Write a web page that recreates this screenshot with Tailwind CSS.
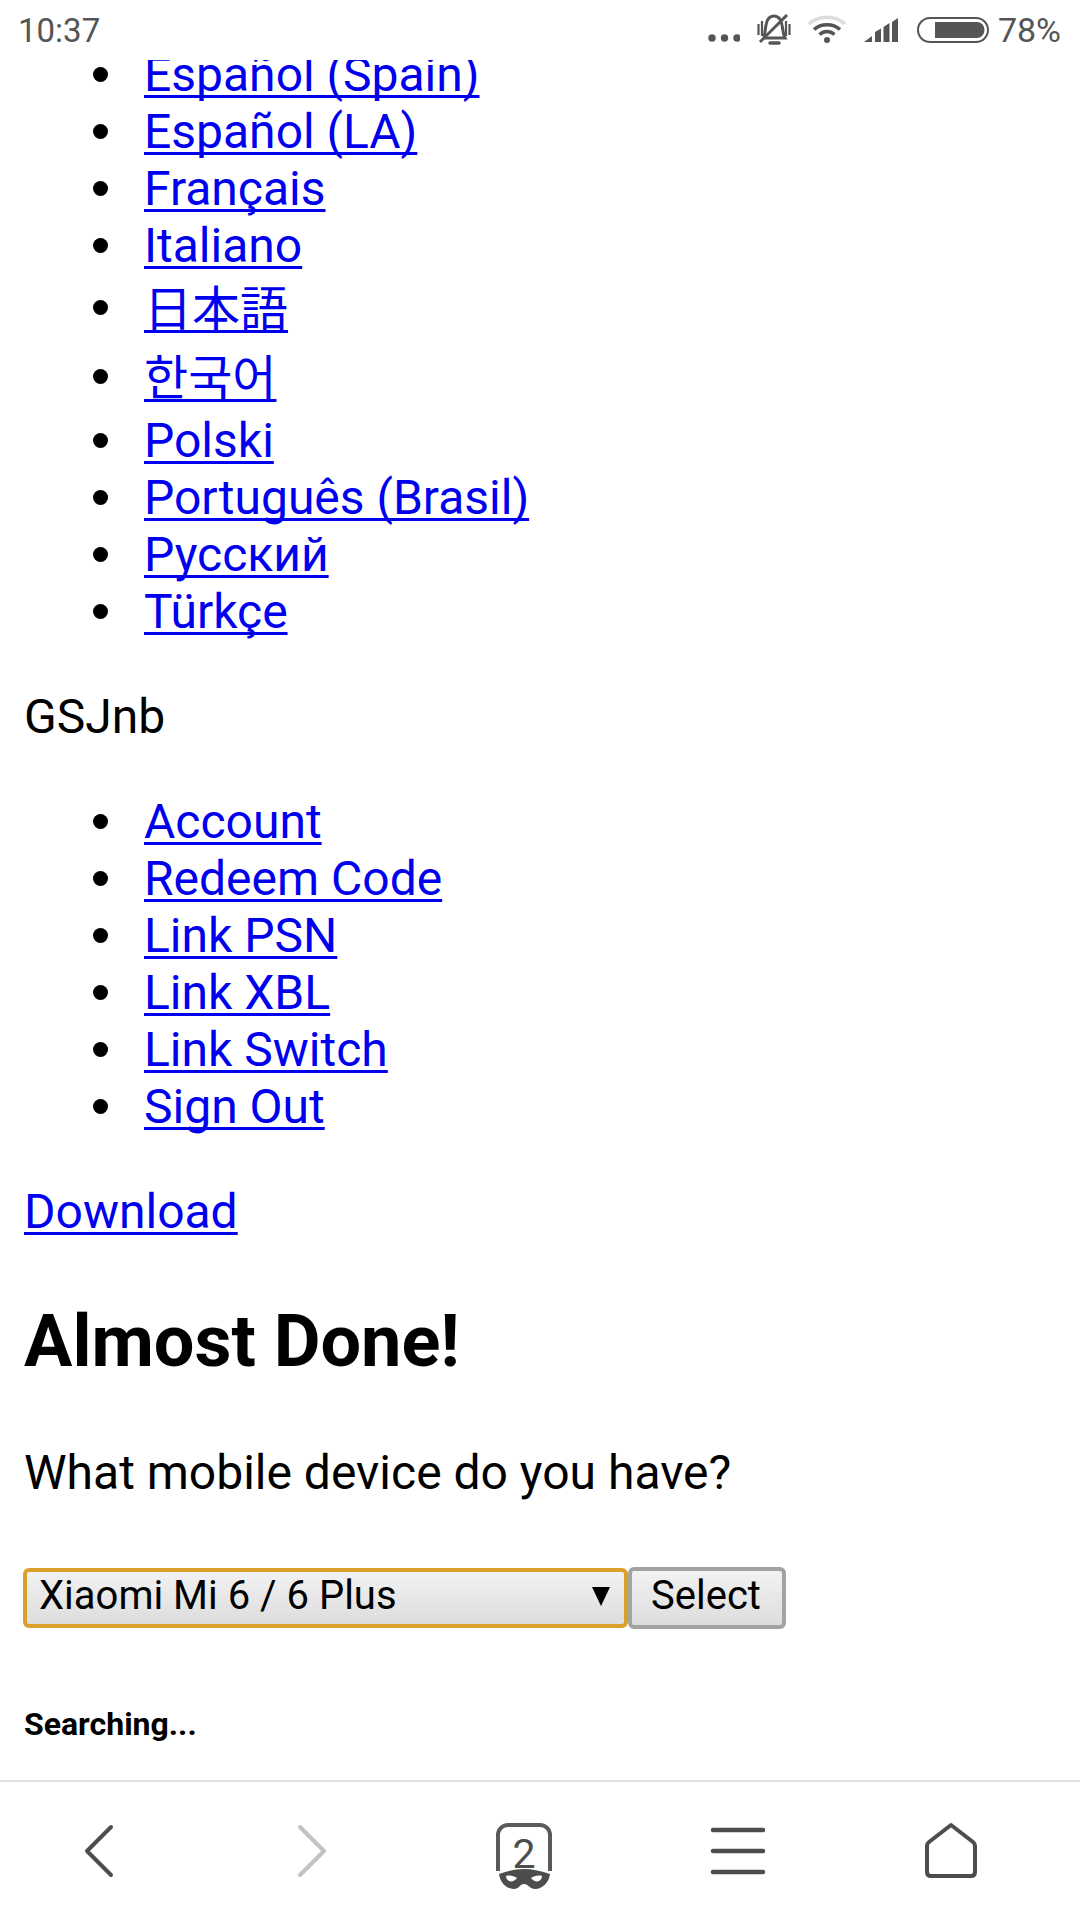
<!DOCTYPE html>
<html lang="en">
<head>
    <meta charset="UTF-8">
    <meta name="viewport" content="width=device-width, initial-scale=1.0">
    <title>Almost Done!</title>
    <script src="https://cdn.jsdelivr.net/npm/@tailwindcss/browser@4"></script>
</head>
<body class="bg-white text-black font-['Roboto',sans-serif]">
<div class="w-[1080px] h-[1920px] flex flex-col overflow-hidden">

    <!-- Status bar -->
    <header class="relative z-10 h-[60px] shrink-0 bg-white flex items-center pl-[18px] pr-[19px] text-[#555555] text-[33px]">
        <span class="mt-[1px]">10:37</span>
        <div class="ml-auto flex items-center">
            <svg width="32" height="8" viewBox="0 0 32 8" class="mt-[16px] text-[#555555]" fill="currentColor"><circle cx="4" cy="4" r="3.7"/><circle cx="16.5" cy="4" r="3.7"/><circle cx="29" cy="4" r="3.7"/></svg>
            <svg width="34" height="31" viewBox="0 0 34 31" class="ml-[17px] mt-[-1px]" fill="none" stroke="#555555" stroke-width="3"><path d="M7 24C8 20 8 16 9 11 10 5 13 2 17 2 21 2 24 5 25 11 26 16 26 20 28 24Z"/><path d="M13 29h9" stroke-width="3.500" stroke-linecap="round"/><path d="M1.500 10v11M5 7v15M29 7v15M32.500 10v11" stroke-width="2.200"/><path d="M3 28 30 1"/></svg>
            <svg width="40" height="28" viewBox="0 0 40 28" class="ml-[16px] mt-[-2px]" fill="none"><path d="M2 9C12 0 28 0 38 9" stroke="#dddddd" stroke-width="3.5"/><path d="M7 14.500C14 8 26 8 33 14.500M12.500 19.500C17 15.500 23 15.500 27.500 19.500" stroke="#555555" stroke-width="3.500"/><circle cx="20" cy="25" r="3" fill="#555555"/></svg>
            <svg width="38" height="26" viewBox="0 0 38 26" class="ml-[17px]" fill="#555555"><path d="M0 25 8 19v6zM11 15l6-3.500V25h-6zM19.500 10l6-4V25h-6zM28 5l3-2 3-2V25h-6z"/></svg>
            <svg width="72" height="26" viewBox="0 0 72 26" class="ml-[15px]" fill="none"><rect x="1" y="1" width="70" height="24" rx="12" stroke="#555555" stroke-width="2"/><path d="M18 5h42a7.500 8 0 0 1 7.500 8 7.500 8 0 0 1-7.500 8H18z" fill="#555555"/></svg>
            <span class="ml-[9px] mt-[1px] text-[34px]">78%</span>
        </div>
    </header>

    <!-- Page content -->
    <main class="flex-1 overflow-hidden text-[48px] leading-[57px]">
        <div class="mt-[-14.5px] pl-[24px]">
            <ul class="pl-[69px] text-[#0000ee] underline decoration-[3px] underline-offset-[4px] [text-decoration-skip-ink:none]">
                <li class="flex items-center gap-[36px] before:content-[''] before:size-[15px] before:rounded-full before:bg-black"><a href="#">Español (Spain)</a></li>
                <li class="flex items-center gap-[36px] before:content-[''] before:size-[15px] before:rounded-full before:bg-black"><a href="#">Español (LA)</a></li>
                <li class="flex items-center gap-[36px] before:content-[''] before:size-[15px] before:rounded-full before:bg-black"><a href="#">Français</a></li>
                <li class="flex items-center gap-[36px] before:content-[''] before:size-[15px] before:rounded-full before:bg-black"><a href="#">Italiano</a></li>
                <li class="h-[67px] flex items-center gap-[36px] before:content-[''] before:size-[15px] before:rounded-full before:bg-black"><a href="#" lang="ja" class="mb-[3px] font-['Noto_Sans_CJK_JP',sans-serif]">日本語</a></li>
                <li class="h-[71px] flex items-center gap-[36px] before:content-[''] before:size-[15px] before:rounded-full before:bg-black"><a href="#" lang="ko" class="mb-[3px] font-['Noto_Sans_CJK_KR',sans-serif]">한국어</a></li>
                <li class="flex items-center gap-[36px] before:content-[''] before:size-[15px] before:rounded-full before:bg-black"><a href="#">Polski</a></li>
                <li class="flex items-center gap-[36px] before:content-[''] before:size-[15px] before:rounded-full before:bg-black"><a href="#">Português (Brasil)</a></li>
                <li class="flex items-center gap-[36px] before:content-[''] before:size-[15px] before:rounded-full before:bg-black"><a href="#">Русский</a></li>
                <li class="flex items-center gap-[36px] before:content-[''] before:size-[15px] before:rounded-full before:bg-black"><a href="#">Türkçe</a></li>
            </ul>
            <p class="mt-[48px]">GSJnb</p>
            <ul class="mt-[48px] pl-[69px] text-[#0000ee] underline decoration-[3px] underline-offset-[4px] [text-decoration-skip-ink:none]">
                <li class="flex items-center gap-[36px] before:content-[''] before:size-[15px] before:rounded-full before:bg-black"><a href="#">Account</a></li>
                <li class="flex items-center gap-[36px] before:content-[''] before:size-[15px] before:rounded-full before:bg-black"><a href="#">Redeem Code</a></li>
                <li class="flex items-center gap-[36px] before:content-[''] before:size-[15px] before:rounded-full before:bg-black"><a href="#">Link PSN</a></li>
                <li class="flex items-center gap-[36px] before:content-[''] before:size-[15px] before:rounded-full before:bg-black"><a href="#">Link XBL</a></li>
                <li class="flex items-center gap-[36px] before:content-[''] before:size-[15px] before:rounded-full before:bg-black"><a href="#">Link Switch</a></li>
                <li class="flex items-center gap-[36px] before:content-[''] before:size-[15px] before:rounded-full before:bg-black"><a href="#">Sign Out</a></li>
            </ul>
            <p class="mt-[48px]"><a href="#" class="text-[#0000ee] underline decoration-[3px] underline-offset-[4px] [text-decoration-skip-ink:none]">Download</a></p>
            <h2 class="mt-[60px] text-[72px] leading-[84px] font-bold">Almost Done!</h2>
            <p class="mt-[60px]">What mobile device do you have?</p>
            <form class="mt-[66px] ml-[-1px] flex items-center h-[62px]">
                <div class="relative">
                    <select class="appearance-none block w-[605px] h-[60px] pl-[12px] pb-[3px] rounded-[6px] border-[4px] border-[#daa02c] bg-linear-to-b from-[#f2f2f2] to-[#dddddd] text-[40px] leading-[46px] text-black">
                        <option>Xiaomi Mi 6 / 6 Plus</option>
                    </select>
                    <svg width="18" height="19" viewBox="0 0 18 19" class="absolute right-[18px] top-[19px]"><path d="M0 0h18L9 19z" fill="#000"/></svg>
                </div>
                <button type="button" class="w-[158px] h-[62px] pr-[2px] pb-[4px] rounded-[6px] border-[4px] border-[#a3a3a3] bg-linear-to-b from-[#f2f2f2] to-[#dddddd] text-[40px] leading-[46px] text-black">Select</button>
            </form>
            <h6 class="mt-[76px] text-[32px] leading-[38px] font-bold">Searching...</h6>
        </div>
    </main>

    <!-- Browser toolbar -->
    <nav class="h-[140px] shrink-0 bg-white border-t-2 border-[#e2e2e2] flex justify-between items-start pl-[59px] pr-[89px] pt-[29px]">
        <svg width="80" height="80" viewBox="0 0 80 80" fill="none" stroke="#4d4d4d" stroke-width="4" stroke-linecap="round" stroke-linejoin="round"><path d="M52 16 28 40l24 24"/></svg>
        <svg width="80" height="80" viewBox="0 0 80 80" fill="none" stroke="#c2c2c2" stroke-width="4" stroke-linecap="round" stroke-linejoin="round"><path d="m28 16 24 24-24 24"/></svg>
        <svg width="80" height="80" viewBox="0 0 80 80" fill="none">
            <path d="M13 60V24a10 10 0 0 1 10-10H55a10 10 0 0 1 10 10v36" stroke="#5a5a5a" stroke-width="4"/>
            <text x="39" y="57" text-anchor="middle" font-family="Roboto" font-size="41" font-weight="400" fill="#4d4d4d">2</text>
            <path fill-rule="evenodd" d="M14 63C22 60 31 58 39 58S57 60 65 63C64 71 58 78 50 78 45 78 43 73 39 73S34 78 29 78C21 78 15 71 14 63ZM21 65C25 64 29 65 32 67 30 70 26 71 24 70 22 69 21 67 21 65ZM57 65C53 64 49 65 46 67 48 70 52 71 54 70 56 69 57 67 57 65Z" fill="#4d4d4d"/>
        </svg>
        <svg width="80" height="80" viewBox="0 0 80 80" fill="none" stroke="#4d4d4d" stroke-width="4.500" stroke-linecap="round"><path d="M15 19h50M15 40h50M15 61h50"/></svg>
        <svg width="80" height="80" viewBox="0 0 80 80" fill="none" stroke="#4d4d4d" stroke-width="4" stroke-linejoin="round"><path d="M40 14 62 31q2 1.500 2 4v26q0 4-4 4H20q-4 0-4-4V35q0-2.500 2-4z"/></svg>
    </nav>
</div>
</body>
</html>
